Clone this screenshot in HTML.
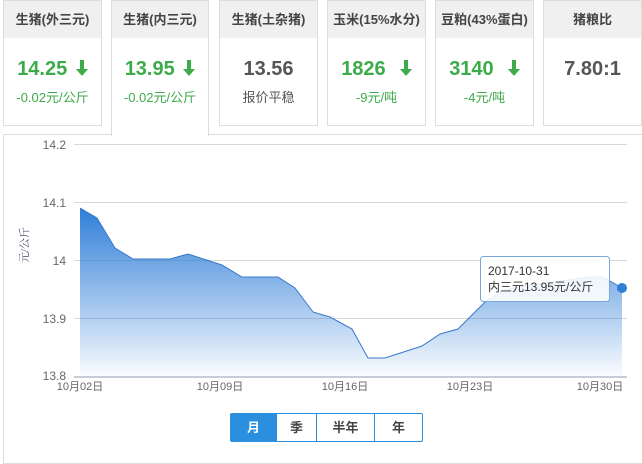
<!DOCTYPE html>
<html><head><meta charset="utf-8"><style>
*{margin:0;padding:0;box-sizing:border-box}
body{width:642px;height:450px;background:#fff;font-family:"Liberation Sans","Noto Sans CJK SC",sans-serif;position:relative;overflow:hidden}
.card{position:absolute;top:0;height:126px;border:1px solid #ddd;background:#fff;text-align:center}
.card .h{height:37px;background:#f0f0f0;line-height:37px;font-size:13px;color:#444;font-weight:bold}
.card .v{margin-top:18px;font-size:20px;font-weight:bold;color:#3dab4a;height:26px;line-height:26px}
.card .v.g{color:#555}
.card .s{font-size:13px;color:#3dab4a;margin-top:5px}
.card .s.g{color:#555}
.arr{display:inline-block;width:12px;height:16px;vertical-align:-1px;margin-left:3px}
.panel{position:absolute;left:3px;top:134px;width:640px;height:330px;border:1px solid #ddd}
.btns{position:absolute;top:413px;left:230px;height:29px;display:flex;border:1px solid #2b8fe0;border-radius:2px}
.btns div{line-height:27px;text-align:center;font-size:13px;font-weight:bold;color:#444;border-left:1px solid #2b8fe0}
</style></head><body>
<div class="panel"></div>
<div class="card" style="left:3px;width:99px"><div class="h">生猪(外三元)</div><div class="v">14.25 <svg class="arr" viewBox="0 0 12 16"><path d="M4 0h4v9h4l-6 7-6-7h4z" fill="#3dab4a"/></svg></div><div class="s">-0.02元/公斤</div></div>
<div class="card" style="left:111px;width:98px;height:136px;border-bottom:none"><div class="h">生猪(内三元)</div><div class="v">13.95 <svg class="arr" viewBox="0 0 12 16"><path d="M4 0h4v9h4l-6 7-6-7h4z" fill="#3dab4a"/></svg></div><div class="s">-0.02元/公斤</div></div>
<div class="card" style="left:219px;width:99px"><div class="h">生猪(土杂猪)</div><div class="v g">13.56</div><div class="s g">报价平稳</div></div>
<div class="card" style="left:327px;width:99px"><div class="h">玉米(15%水分)</div><div class="v">1826 &nbsp;<svg class="arr" viewBox="0 0 12 16"><path d="M4 0h4v9h4l-6 7-6-7h4z" fill="#3dab4a"/></svg></div><div class="s">-9元/吨</div></div>
<div class="card" style="left:435px;width:99px"><div class="h">豆粕(43%蛋白)</div><div class="v">3140 &nbsp;<svg class="arr" viewBox="0 0 12 16"><path d="M4 0h4v9h4l-6 7-6-7h4z" fill="#3dab4a"/></svg></div><div class="s">-4元/吨</div></div>
<div class="card" style="left:543px;width:99px"><div class="h">猪粮比</div><div class="v g">7.80:1</div></div>
<svg style="position:absolute;left:0;top:0" width="642" height="450">
<defs><linearGradient id="gr" x1="0" y1="0" x2="0" y2="1"><stop offset="0" stop-color="#2f7ed8"/><stop offset="1" stop-color="#2f7ed8" stop-opacity="0.03"/></linearGradient></defs>
<g stroke="#d8d8d8" stroke-width="1">
<line x1="74" y1="144.5" x2="627" y2="144.5"/><line x1="74" y1="202.5" x2="627" y2="202.5"/><line x1="74" y1="260.5" x2="627" y2="260.5"/><line x1="74" y1="318.5" x2="627" y2="318.5"/></g>
<polygon fill="url(#gr)" points="80,208 97,218 115,248 133,259 170,259 188,254 222,265 242,277 278,277 295,288 313,312 330,317 352,329 368,358 385,358 422,346 440,334 458,329 487,300 505,290 530,285 560,281 590,277 603,277 622,288 622,376 80,376"/>
<polyline fill="none" stroke="#3a78c8" stroke-width="1" points="80,208 97,218 115,248 133,259 170,259 188,254 222,265 242,277 278,277 295,288 313,312 330,317 352,329 368,358 385,358 422,346 440,334 458,329 487,300 505,290 530,285 560,281 590,277 603,277 622,288"/>
<line x1="74" y1="377" x2="627" y2="377" stroke="#c8ccd8" stroke-width="2"/>
<circle cx="622" cy="288" r="5" fill="#2f7ed8"/>
<g font-size="12" fill="#666" text-anchor="end"><text x="66" y="149">14.2</text><text x="66" y="207">14.1</text><text x="66" y="265">14</text><text x="66" y="323">13.9</text><text x="66" y="380">13.8</text></g>
<g font-size="11" fill="#666" text-anchor="middle"><text x="80" y="390">10月02日</text><text x="220" y="390">10月09日</text><text x="345" y="390">10月16日</text><text x="470" y="390">10月23日</text><text x="600" y="390">10月30日</text></g>
<text transform="translate(28,245) rotate(-90)" font-size="11" fill="#446" text-anchor="middle" font-family="Liberation Serif,Noto Serif CJK SC,serif">元/公斤</text>
<rect x="480.5" y="256.5" width="129" height="45" rx="3" fill="#fff" fill-opacity="0.88" stroke="#7aa7dc"/>
<text x="488" y="275" font-size="12" fill="#333">2017-10-31</text>
<text x="488" y="291" font-size="12" fill="#333">内三元13.95元/公斤</text>
</svg>
<div class="btns"><div style="width:45px;border-left:none;background:#2b8fe0;color:#fff">月</div><div style="width:40px">季</div><div style="width:58px">半年</div><div style="width:48px">年</div></div>
</body></html>
